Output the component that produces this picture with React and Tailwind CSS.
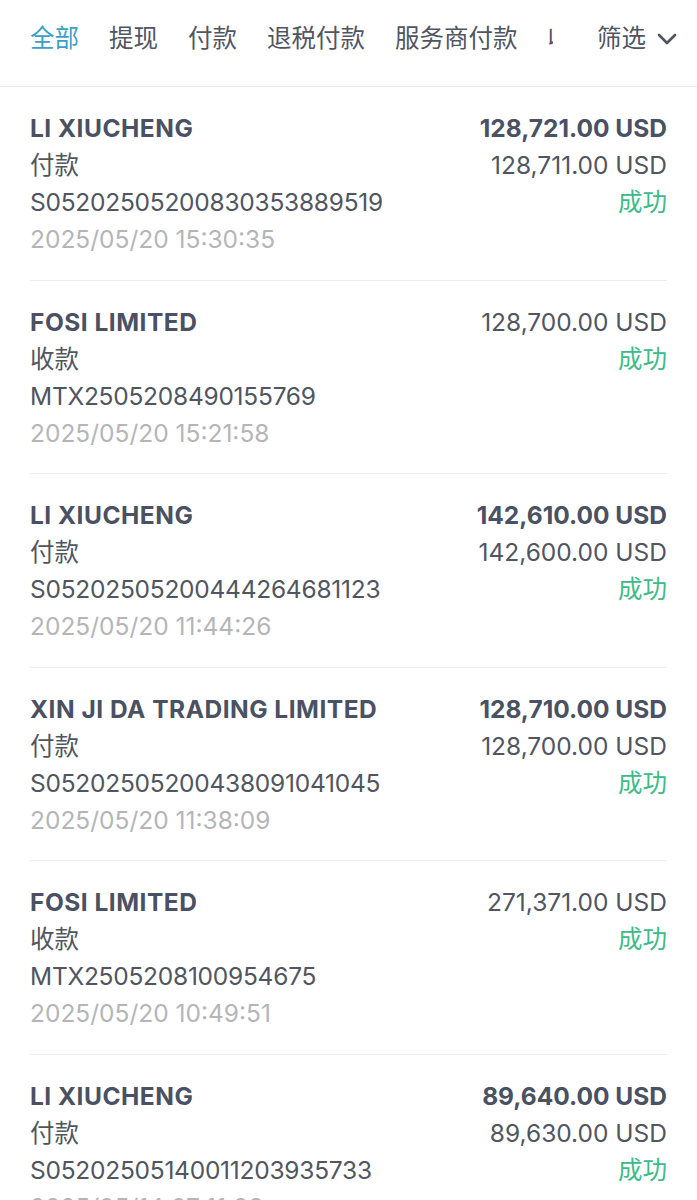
const tabs = ["全部", "提现", "付款", "退税付款", "服务商付款", "收款"];

const records = [
  {
    name: "LI XIUCHENG",
    type: "付款",
    no: "S05202505200830353889519",
    time: "2025/05/20 15:30:35",
    amount: "128,721.00 USD",
    paid: "128,711.00 USD",
  },
  {
    name: "FOSI LIMITED",
    type: "收款",
    no: "MTX2505208490155769",
    time: "2025/05/20 15:21:58",
    amount: "128,700.00 USD",
  },
  {
    name: "LI XIUCHENG",
    type: "付款",
    no: "S05202505200444264681123",
    time: "2025/05/20 11:44:26",
    amount: "142,610.00 USD",
    paid: "142,600.00 USD",
  },
  {
    name: "XIN JI DA TRADING LIMITED",
    type: "付款",
    no: "S05202505200438091041045",
    time: "2025/05/20 11:38:09",
    amount: "128,710.00 USD",
    paid: "128,700.00 USD",
  },
  {
    name: "FOSI LIMITED",
    type: "收款",
    no: "MTX2505208100954675",
    time: "2025/05/20 10:49:51",
    amount: "271,371.00 USD",
  },
  {
    name: "LI XIUCHENG",
    type: "付款",
    no: "S05202505140011203935733",
    time: "2025/05/14 07:11:08",
    amount: "89,640.00 USD",
    paid: "89,630.00 USD",
  },
];

const Row = ({ item, last }) => {
  return (
    <div className="mx-[30px]">
      <div className="flex justify-between pt-[23px] pb-[21.6px] leading-[37px]">
        <div>
          <div className="font-bold tracking-[0.5px] text-[#4a5162]">{item.name}</div>
          <div className="text-[#50555f]">{item.type}</div>
          <div className="tracking-[-0.25px] text-[#50555f]">{item.no}</div>
          <div className="text-[#b5b5b8]">{item.time}</div>
        </div>
        <div className="text-right">
          {item.paid ? (
            <>
              <div className="font-bold text-[#4a5162]">{item.amount}</div>
              <div className="text-[#50555f]">{item.paid}</div>
            </>
          ) : (
            <div className="text-[#50555f]">{item.amount}</div>
          )}
          <div className="text-[#3dba88]">成功</div>
        </div>
      </div>
      {!last && <div className="h-px bg-[#ededed]" />}
    </div>
  );
};

const App = () => {
  return (
    <div
      className="bg-white min-h-screen text-[24.5px]"
      style={{ fontFamily: '"Inter", "Noto Sans CJK SC", sans-serif' }}
    >
      <div className="h-[87px] flex items-start pt-[20px] border-b border-[#ececec] leading-[37px]">
        <div className="flex-1 overflow-hidden pl-[30px]">
          <div className="flex gap-[30px] whitespace-nowrap">
            {tabs.map((t, i) => (
              <span
                key={t}
                className={i === 0 ? "text-[#3a9fc9]" : "text-[#50555f]"}
              >
                {t}
              </span>
            ))}
          </div>
        </div>
        <div className="w-[144px] flex items-center pl-[44px] text-[#50555f]">
          <span>筛选</span>
          <svg
            width="22"
            height="14"
            viewBox="0 0 22 14"
            className="ml-[10px]"
            fill="none"
            stroke="#50555f"
            strokeWidth="2.6"
            strokeLinecap="round"
            strokeLinejoin="round"
          >
            <polyline points="3,3 11,11 19,3" />
          </svg>
        </div>
      </div>
      {records.map((r, i) => (
        <Row key={i} item={r} last={i === records.length - 1} />
      ))}
    </div>
  );
};

export default App;
